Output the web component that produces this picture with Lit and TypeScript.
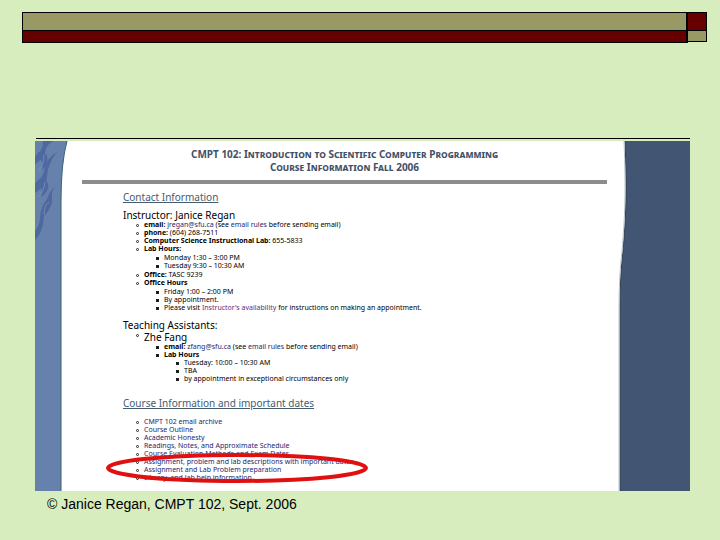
import { LitElement, html, css } from "lit";
import { customElement } from "lit/decorators.js";

const courseLinks = [
  "CMPT 102 email archive",
  "Course Outline",
  "Academic Honesty",
  "Readings, Notes, and Approximate Schedule",
  "Course Evaluation Methods and Exam Dates",
  "Assignment, problem and lab descriptions with important dates",
  "Assignment and Lab Problem preparation",
  "Library, and lab help information",
];

@customElement("slide-banner")
class SlideBanner extends LitElement {
  static styles = css`
    :host { display: grid; grid-template-columns: 1fr 19px; grid-template-rows: 19px 12px; }
    .cell { border: 1px solid #000; box-sizing: border-box; }
    .olive { background: #999966; }
    .maroon { background: #660000; }
    .low { margin-top: -1px; }
    .left { border-right-width: 2px; }
    .right { border-left-width: 0; }
    .short { margin-bottom: 1px; }
  `;
  render() {
    return html`
      <div class="cell olive left"></div>
      <div class="cell maroon right"></div>
      <div class="cell maroon low left"></div>
      <div class="cell olive low right short"></div>
    `;
  }
}

@customElement("course-page")
class CoursePage extends LitElement {
  static styles = css`
    :host {
      display: grid;
      grid-template-columns: 33px 1fr 73px;
      background: #fff;
      font-family: "Noto Sans", sans-serif;
      font-size: 7px;
      line-height: 8px;
      color: #000;
    }
    .side { display: block; width: 100%; height: 350px; }
    .body { padding: 7px 10px 0 14px; white-space: nowrap; }
    h1 {
      margin: 0;
      font: 700 10px/13px "Noto Sans", sans-serif;
      font-variant: small-caps;
      text-align: center;
      color: #435066;
    }
    .rule { height: 4px; margin: 6px 0 7px; background: #8c8c8c; }
    .content { padding-left: 41px; }
    h2, h3 { margin: 0; font-weight: 400; }
    h2 { font-size: 10px; line-height: 12px; color: #445c70; text-decoration: underline; }
    h3 { font-size: 10px; line-height: 12px; margin-top: 6px; }
    ul { margin: 0; padding-left: 21px; list-style: none; }
    ul ul { padding: 1px 0 1px 20px; }
    ul ul ul, ul .people { padding-top: 0; padding-bottom: 0; }
    li { position: relative; }
    li::before {
      content: "";
      position: absolute;
      left: -8px;
      top: 3px;
      width: 3px;
      height: 3px;
      box-sizing: border-box;
      border: 1px solid #222;
      border-radius: 2px;
    }
    ul ul li::before { background: #000; border-radius: 0; }
    .name { font-size: 10px; line-height: 12px; }
    a { color: #26266e; text-decoration: none; }
    a.visited { color: #6a2a78; }
    h2.courses { margin-top: 14px; }
    ul.courses { margin-top: 9px; }
  `;
  render() {
    return html`
      <svg class="side" viewBox="0 0 33 350" preserveAspectRatio="none" aria-hidden="true">
        <path d="M0 0H32Q26 22 26 60V350H0Z" fill="#6682ac" />
        <g fill="#465f9c" opacity=".7">
          <path d="M8 0Q9 9 0 15V23Q9 18 11 8Q13 3 18 0Z" />
          <path d="M2 15Q9 19 7 29Q14 23 12 15Q9 9 3 11Z" />
          <path d="M22 11Q11 17 9 30Q7 38 0 42V52Q12 45 12 35Q13 22 22 11Z" />
          <path d="M1 42Q9 46 6 56Q15 50 13 42Q8 36 3 39Z" />
          <path d="M22 45Q16 48 17 57Q18 66 9 75Q8 92 0 99V90Q5 83 5 76Q6 65 12 58Q15 48 22 45Z" />
        </g>
        <g fill="none" stroke="#8098c0" opacity=".7">
          <path d="M9 14Q9 25 3 30M10 41Q9 51 3 56M14 61Q9 64 9 74" />
        </g>
        <path d="M32 0Q26 22 26 60V350" fill="none" stroke="#3b5f72" />
      </svg>
      <div class="body">
        <h1>CMPT 102: Introduction to Scientific Computer Programming<br />Course Information Fall 2006</h1>
        <div class="rule"></div>
        <div class="content">
          <h2>Contact Information</h2>
          <h3>Instructor: Janice Regan</h3>
          <ul>
            <li><b>email:</b> <a href="#">jregan@sfu.ca</a> (see <a href="#">email rules</a> before sending email)</li>
            <li><b>phone:</b> (604) 268-7511</li>
            <li><b>Computer Science Instructional Lab:</b> 655-5833</li>
            <li><b>Lab Hours:</b>
              <ul>
                <li>Monday 1:30 – 3:00 PM</li>
                <li>Tuesday 9:30 – 10:30 AM</li>
              </ul>
            </li>
            <li><b>Office:</b> TASC 9239</li>
            <li><b>Office Hours</b>
              <ul>
                <li>Friday 1:00 – 2:00 PM</li>
                <li>By appointment.</li>
                <li>Please visit <a class="visited" href="#">Instructor's availability</a> for instructions on making an appointment.</li>
              </ul>
            </li>
          </ul>
          <h3>Teaching Assistants:</h3>
          <ul>
            <li><div class="name">Zhe Fang</div>
              <ul class="people">
                <li><b>email:</b> <a href="#">zfang@sfu.ca</a> (see <a href="#">email rules</a> before sending email)</li>
                <li><b>Lab Hours</b>
                  <ul>
                    <li>Tuesday: 10:00 – 10:30 AM</li>
                    <li>TBA</li>
                    <li>by appointment in exceptional circumstances only</li>
                  </ul>
                </li>
              </ul>
            </li>
          </ul>
          <h2 class="courses">Course Information and important dates</h2>
          <ul class="courses">
            ${courseLinks.map((t) => html`<li><a href="#">${t}</a></li>`)}
          </ul>
        </div>
      </div>
      <svg class="side" viewBox="0 0 73 350" preserveAspectRatio="none" aria-hidden="true">
        <path d="M8 0C10 50 9 75 6 110Q3 135 3 165V350H73V0Z" fill="#425573" />
        <path d="M8 0C10 50 9 75 6 110Q3 135 3 165V350" fill="none" stroke="#2e3e4e" />
        <path d="M7 0C9 50 8 75 5 110Q2 135 2 165V350" fill="none" stroke="#b9c4cc" />
      </svg>
    `;
  }
}

@customElement("app-root")
class AppRoot extends LitElement {
  static styles = css`
    :host { display: block; min-height: 100vh; box-sizing: border-box; padding: 12px 13px 0 22px; background: #d7edbe; }
    .slide { margin: 95px 17px 0 13px; }
    hr { margin: 0 0 2px 1px; border: 0; height: 1px; background: #000; }
    .frame { position: relative; }
    .ring { position: absolute; left: 70px; top: 311px; width: 264px; height: 32px; }
    footer { padding: 4px 0 0 12px; font: 14px/18px "Liberation Sans", sans-serif; color: #000; }
  `;
  render() {
    return html`
      <slide-banner></slide-banner>
      <main class="slide">
        <hr />
        <div class="frame">
          <course-page></course-page>
          <svg class="ring" viewBox="0 0 264 32" aria-hidden="true">
            <ellipse cx="132" cy="16" rx="129" ry="13" fill="none" stroke="#e01010" stroke-width="4" />
          </svg>
        </div>
        <footer>© Janice Regan, CMPT 102, Sept. 2006</footer>
      </main>
    `;
  }
}
